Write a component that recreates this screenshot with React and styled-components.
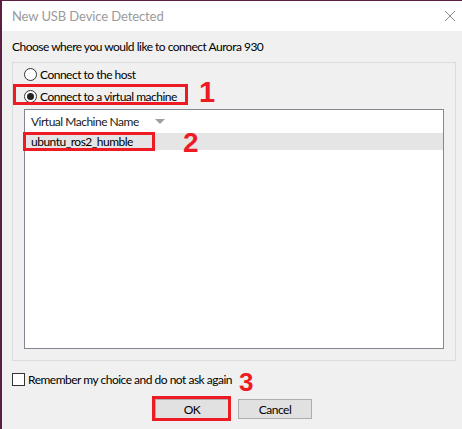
import React from 'react'
import styled, { createGlobalStyle } from 'styled-components'

const GlobalStyle = createGlobalStyle`
  html, body {
    margin: 0;
    padding: 0;
    background: #f0f0f0;
  }
  body {
    font-family: Lato, "Noto Sans", sans-serif;
    font-size: 12px;
    letter-spacing: -0.5px;
    color: #000;
  }
`

const Window = styled.div`
  width: 460px;
  height: 428px;
  border-left: 2px solid #5b1f42;
  border-top: 1px solid #5b1f42;
  background: #f0f0f0;
  display: flex;
  flex-direction: column;
  overflow: hidden;
`

const TitleBar = styled.div`
  height: 30px;
  background: #fff;
  display: flex;
  align-items: center;
  justify-content: space-between;
  padding: 0 6px 0 10px;
`

const Title = styled.span`
  font-size: 13px;
  letter-spacing: -0.1px;
  color: #9a9a9a;
`

const Content = styled.div`
  display: flex;
  flex-direction: column;
  padding: 8px 0 0 10px;
`

const Prompt = styled.div`
  line-height: 16px;
`

const GroupBox = styled.div`
  box-sizing: border-box;
  width: 444px;
  height: 299px;
  margin-top: 7px;
  border: 1px solid #dcdcdc;
  padding: 3px 0 0 11px;
  display: flex;
  flex-direction: column;
  align-items: flex-start;
`

const RadioRow = styled.label`
  display: inline-flex;
  align-items: center;
  height: 16px;
`

const RadioDot = styled.span`
  box-sizing: border-box;
  width: 13px;
  height: 13px;
  border-radius: 50%;
  border: 1px solid #333;
  background: #fff;
  margin-right: 3px;
  display: flex;
  align-items: center;
  justify-content: center;
  &::before {
    content: '';
    width: 7px;
    height: 7px;
    border-radius: 50%;
    background: ${p => (p.$checked ? '#222' : 'transparent')};
  }
`

const Anchor = styled.span`
  position: relative;
  display: inline-flex;
  margin-top: ${p => p.$gap || 0}px;
`

const Marked = styled(Anchor)`
  &::after {
    content: '';
    position: absolute;
    inset: ${p => p.$inset};
    border: 3px solid #ed1c24;
    pointer-events: none;
  }
`

const Num = styled.span`
  position: absolute;
  left: calc(100% + ${p => p.$dx}px);
  top: ${p => p.$dy}px;
  font-family: "Liberation Sans", Arial, sans-serif;
  font-weight: bold;
  font-size: ${p => p.$size}px;
  letter-spacing: 0;
  line-height: 1;
  color: #ed1c24;
  white-space: nowrap;
`

const ListBox = styled.div`
  box-sizing: border-box;
  width: 420px;
  height: 240px;
  margin-top: 5px;
  border: 1px solid #828790;
  background: #fff;
  display: flex;
  flex-direction: column;
`

const ListHeader = styled.div`
  height: 23px;
  display: flex;
  align-items: center;
  padding-left: 6px;
  color: #1a1a1a;
`

const SortArrow = styled.span`
  width: 0;
  height: 0;
  margin-left: 16px;
  border-left: 5px solid transparent;
  border-right: 5px solid transparent;
  border-top: 5px solid #a0a0a0;
`

const ListRow = styled.div`
  height: 17px;
  display: flex;
  align-items: center;
  padding-left: 6px;
  background: ${p => (p.$selected ? '#e5e5e5' : 'transparent')};
`

const CheckRow = styled.label`
  display: flex;
  align-items: center;
  height: 13px;
  margin-top: 12px;
`

const CheckBox = styled.span`
  box-sizing: border-box;
  width: 13px;
  height: 13px;
  border: 1px solid #333;
  background: #fff;
  margin-right: 3px;
`

const ButtonRow = styled.div`
  display: flex;
  gap: 9px;
  margin-top: 13px;
  padding-left: 143px;
`

const Button = styled.button`
  box-sizing: border-box;
  width: 74px;
  height: 20px;
  padding: 0;
  border: 1px solid #adadad;
  background: #e1e1e1;
  font-family: inherit;
  font-size: 12px;
  letter-spacing: inherit;
  color: #000;
`

const CloseIcon = () => (
  <svg width="12" height="12" viewBox="0 0 12 12">
    <path d="M1 1 L11 11 M11 1 L1 11" stroke="#8a8a8a" strokeWidth="1" fill="none" />
  </svg>
)

const App = () => {
  return (
    <>
      <GlobalStyle />
      <Window>
        <TitleBar>
          <Title>New USB Device Detected</Title>
          <CloseIcon />
        </TitleBar>
        <Content>
          <Prompt>Choose where you would like to connect Aurora 930</Prompt>
          <GroupBox>
            <RadioRow>
              <RadioDot />
              Connect to the host
            </RadioRow>
            <Marked $gap={6} $inset="-4px -11px -1px -11px">
              <RadioRow>
                <RadioDot $checked />
                Connect to a virtual machine
              </RadioRow>
              <Num $dx={22} $dy={-10} $size={29}>1</Num>
            </Marked>
            <ListBox>
              <ListHeader>
                Virtual Machine Name
                <SortArrow />
              </ListHeader>
              <ListRow $selected>
                <Marked $inset="-2px -22px -2px -8px">
                  {copy.vmName}
                  <Num $dx={50} $dy={-5} $size={28}>2</Num>
                </Marked>
              </ListRow>
            </ListBox>
          </GroupBox>
          <CheckRow>
            <CheckBox />
            <Anchor>
              {copy.remember}
              <Num $dx={7} $dy={-3} $size={26}>3</Num>
            </Anchor>
          </CheckRow>
          <ButtonRow>
            <Marked $inset="-3px -2px -2px -3px">
              <Button>OK</Button>
            </Marked>
            <Button>Cancel</Button>
          </ButtonRow>
        </Content>
      </Window>
    </>
  )
}

const copy = {
  vmName: 'ubuntu_ros2_humble',
  remember: 'Remember my choice and do not ask again'
}

export default App
